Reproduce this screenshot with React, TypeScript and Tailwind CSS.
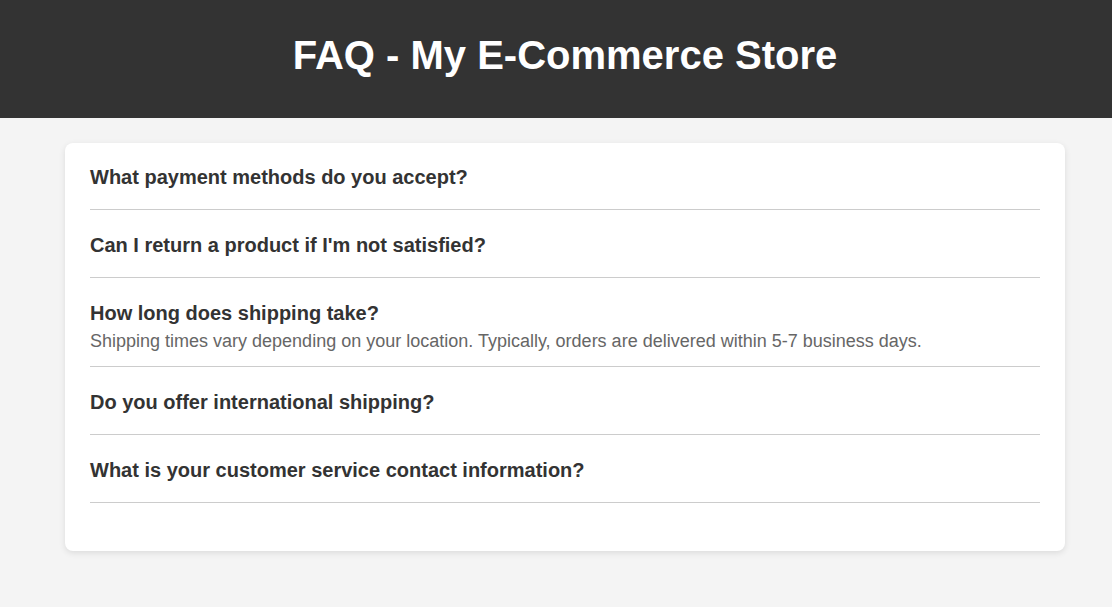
import React from 'react';
import clsx from 'clsx';

interface FaqItem {
    question: string;
    answer?: string;
}

const faqs: FaqItem[] = [
    { question: 'What payment methods do you accept?' },
    { question: "Can I return a product if I'm not satisfied?" },
    {
        question: 'How long does shipping take?',
        answer: 'Shipping times vary depending on your location. Typically, orders are delivered within 5-7 business days.',
    },
    { question: 'Do you offer international shipping?' },
    { question: 'What is your customer service contact information?' },
];

const App: React.FC = () => {
    return (
        <div className="min-h-screen bg-[#f4f4f4] font-['Liberation_Sans',Arial,sans-serif]">
            {/* Header */}
            <header className="h-[118px] bg-[#333333] flex items-center justify-center pl-[18px] pb-[8px]">
                <h1 className="text-[40px] leading-[46px] font-bold text-white">FAQ - My E-Commerce Store</h1>
            </header>

            {/* FAQ card */}
            <div className="pl-[18px]">
                <main className="w-[1000px] mx-auto mt-[25px] bg-white rounded-lg shadow-[0_2px_6px_rgba(0,0,0,0.1)] px-[25px] pt-[23px] pb-[24px]">
                    {faqs.map((item) => (
                        <div
                            key={item.question}
                            className={clsx('border-b border-[#cccccc] mb-[24px]', item.answer ? 'pb-[14px]' : 'pb-[20px]')}
                        >
                            <h3 className="text-[20px] leading-[23px] font-bold text-[#333333]">{item.question}</h3>
                            {item.answer && (
                                <p className="mt-[6px] text-[18px] leading-[21px] text-[#666666]">{item.answer}</p>
                            )}
                        </div>
                    ))}
                </main>
            </div>
        </div>
    );
};

export default App;
